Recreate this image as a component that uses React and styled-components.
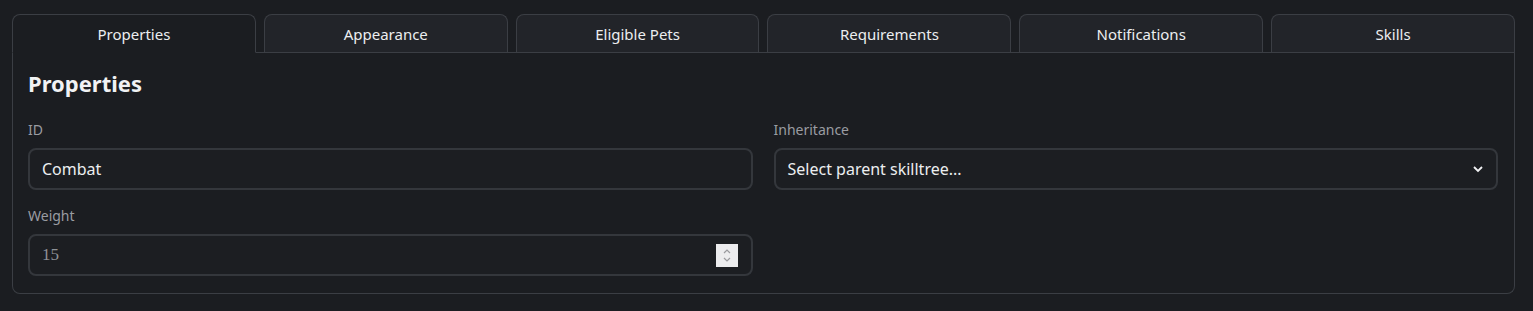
import React from 'react';
import styled, { createGlobalStyle } from 'styled-components';

const Global = createGlobalStyle`
  html, body {
    margin: 0;
    background: #1b1d21;
  }
  body {
    font-family: "Segoe UI", "Noto Sans", sans-serif;
    color: #e9eaec;
  }
`

const Page = styled.div`
  padding: 14px 18px 17px 12px;
`

const TabList = styled.div`
  display: flex;
  gap: 8px;
  border-bottom: 1px solid #3b3e44;
`

const Tab = styled.div`
  flex: 1;
  height: 37px;
  display: flex;
  align-items: center;
  justify-content: center;
  font-size: 15px;
  color: #eceef0;
  border: 1px solid #3b3e44;
  border-bottom: ${p => (p.$active ? '1px solid #1b1d21' : 'none')};
  margin-bottom: ${p => (p.$active ? '-1px' : '0')};
  border-radius: 8px 8px 0 0;
  background: ${p => (p.$active ? '#1b1d21' : '#222429')};
`

const Panel = styled.div`
  border: 1px solid #3b3e44;
  border-top: none;
  border-radius: 0 0 8px 8px;
  padding: 18px 16px 17px 15px;
`

const Heading = styled.h2`
  margin: 0 0 25px;
  font-size: 22px;
  line-height: 24px;
  font-weight: 700;
  color: #f1f2f4;
`

const Grid = styled.div`
  display: grid;
  grid-template-columns: 1fr 1fr;
  column-gap: 21px;
  row-gap: 16px;
`

const Field = styled.div`
  display: flex;
  flex-direction: column;
  gap: 8px;
`

const Label = styled.div`
  font-size: 14px;
  line-height: 20px;
  color: #9a9ca1;
`

const Box = styled.div`
  position: relative;
  height: 42px;
  box-sizing: border-box;
  border: 2px solid #34373c;
  border-radius: 8px;
  background: #1c1e22;
  display: flex;
  align-items: center;
  padding: 0 12px;
  font-size: ${p => (p.$serif ? '17px' : '16px')};
  color: ${p => (p.$muted ? '#8e9196' : '#eceef0')};
  font-family: ${p => (p.$serif ? '"Liberation Serif", serif' : 'inherit')};
`

const Value = styled.span`
  flex: 1;
`

const Spinner = styled.div`
  width: 22px;
  height: 23px;
  background: #ececee;
  display: flex;
  align-items: center;
  justify-content: center;
  margin-right: 1px;
`

const Chevron = styled.svg`
  display: block;
`

const App = () => {
  const tabs = ['Properties', 'Appearance', 'Eligible Pets', 'Requirements', 'Notifications', 'Skills'];
  return (
    <>
      <Global />
      <Page>
        <TabList>
          {tabs.map((t, i) => (
            <Tab key={t} $active={i === 0}>{t}</Tab>
          ))}
        </TabList>
        <Panel>
          <Heading>Properties</Heading>
          <Grid>
            <Field>
              <Label>ID</Label>
              <Box><Value>Combat</Value></Box>
            </Field>
            <Field>
              <Label>Inheritance</Label>
              <Box>
                <Value>Select parent skilltree...</Value>
                <Chevron width="12" height="8" viewBox="0 0 12 8">
                  <path d="M2 2l4 4 4-4" fill="none" stroke="#f1f2f4" strokeWidth="1.8" />
                </Chevron>
              </Box>
            </Field>
            <Field>
              <Label>Weight</Label>
              <Box $muted $serif>
                <Value>15</Value>
                <Spinner>
                  <Chevron width="10" height="17" viewBox="0 0 10 17">
                    <path d="M2 6l3-3 3 3M2 11l3 3 3-3" fill="none" stroke="#9a9a9e" strokeWidth="1.2" />
                  </Chevron>
                </Spinner>
              </Box>
            </Field>
          </Grid>
        </Panel>
      </Page>
    </>
  );
};

export default App;
